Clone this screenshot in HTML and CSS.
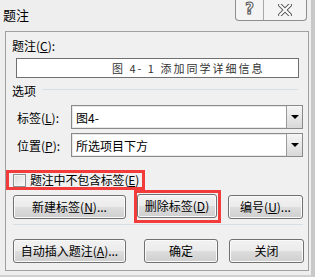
FILE: index.html
```html
<!DOCTYPE html>
<html lang="zh-CN">
<head>
    <meta charset="UTF-8">
    <title>题注</title>
    <link rel="stylesheet" href="styles.css">
</head>
<body>

<div class="window">
    <div class="titlebar">
        <span class="title">题注</span>
        <div class="caption-btns">
            <span class="cap-help">?</span>
            <span class="cap-close">
                <svg width="14" height="12" viewBox="0 0 14 12">
                    <path d="M2 1 L12 11 M12 1 L2 11" stroke="#5a5a5a" stroke-width="4" stroke-linecap="square"/>
                    <path d="M2 1 L12 11 M12 1 L2 11" stroke="#ffffff" stroke-width="2" stroke-linecap="square"/>
                </svg>
            </span>
        </div>
    </div>

    <div class="client">
        <div class="label">题注(<u>C</u>):</div>
        <div class="caption-input">图 4- 1 添加同学详细信息</div>

        <!-- 选项 -->
        <div class="group">
            <span>选项</span>
            <span class="group-line"></span>
        </div>
        <div class="field">
            <span class="field-label">标签(<u>L</u>):</span>
            <div class="combo">
                <span class="combo-text">图4-</span>
                <span class="combo-arrow"></span>
            </div>
        </div>
        <div class="field">
            <span class="field-label">位置(<u>P</u>):</span>
            <div class="combo">
                <span class="combo-text">所选项目下方</span>
                <span class="combo-arrow"></span>
            </div>
        </div>

        <div class="mark check-mark">
            <span class="checkbox"></span>
            <span>题注中不包含标签(<u>E</u>)</span>
        </div>

        <div class="btn-row row1">
            <button class="btn w-wide">新建标签(<u>N</u>)...</button>
            <div class="mark btn-mark">
                <button class="btn w-mid">删除标签(<u>D</u>)</button>
            </div>
            <button class="btn w-num">编号(<u>U</u>)...</button>
        </div>

        <div class="sep"></div>

        <div class="btn-row row2">
            <button class="btn w-wide">自动插入题注(<u>A</u>)...</button>
            <button class="btn w-ok">确定</button>
            <button class="btn w-num">关闭</button>
        </div>
    </div>
</div>

</body>
</html>
```

FILE: styles.css
```css
body { margin: 0; font: 12px "Noto Sans CJK SC", sans-serif; color: #000; }
u { text-decoration: underline; text-underline-offset: 1px; }

.window { width: 315px; height: 277px; box-sizing: border-box; background: #eeeeee; display: flex; flex-direction: column; border-right: 4px solid #c8c8c8; border-bottom: 2px solid #d0d0d0; }

.titlebar { height: 31px; flex: none; display: flex; justify-content: space-between; align-items: flex-start; }
.title { padding: 6px 0 0 3px; font-size: 13px; line-height: 18px; }
.caption-btns { display: flex; height: 20px; margin-right: 4px; border: 1px solid #8e8e8e; border-top: none; border-radius: 0 0 4px 4px; background: #f4f4f4; }
.cap-help { width: 27px; border-right: 1px solid #a8a8a8; text-align: center; font: bold 15px "DejaVu Sans", sans-serif; line-height: 19px; color: #fff; -webkit-text-stroke: 1px #555; }
.cap-close { width: 42px; display: flex; align-items: center; justify-content: center; }

.client { flex: 1; margin: 0 2px 4px 5px; border: 1px solid #a0a0a0; display: flex; flex-direction: column; background: #f0f0f0; }

.label { margin: 6px 0 0 6px; line-height: 16px; }
.caption-input { margin: 4px 0 0 10px; width: 283px; height: 20px; box-sizing: border-box; border: 1px solid #707070; background: #fff; padding-left: 95px; font-size: 11px; line-height: 18px; letter-spacing: 2px; color: #333; white-space: nowrap; }

.group { margin: 5px 0 0 6px; display: flex; align-items: center; line-height: 16px; width: 286px; }
.group-line { flex: 1; height: 1px; background: #d5dfe5; margin-left: 6px; margin-top: -3px; }

.field { display: flex; align-items: center; margin-left: 11px; }
.field + .field { margin-top: 4px; }
.group + .field { margin-top: 6px; }
.field-label { width: 54px; }
.combo { width: 232px; height: 24px; box-sizing: border-box; border: 1px solid #8a8a8a; background: #fff; display: flex; align-items: center; box-shadow: inset 0 0 0 1px #e8e8e8; }
.combo-text { flex: 1; padding-left: 4px; }
.combo-arrow { width: 16px; height: 22px; box-sizing: border-box; border-left: 1px solid #9a9a9a; background: linear-gradient(#f6f6f6, #d8d8d8); position: relative; }
.combo-arrow::after { content: ""; position: absolute; left: 4px; top: 9px; border-left: 4px solid transparent; border-right: 4px solid transparent; border-top: 4px solid #000; }

.mark { border: 3px solid #f23c3c; }
.check-mark { margin-top: 13px; align-self: flex-start; height: 20px; box-sizing: border-box; display: flex; align-items: center; gap: 4px; padding: 0 3px 0 4px; line-height: 14px; white-space: nowrap; letter-spacing: -0.2px; }
.checkbox { width: 11px; height: 11px; border: 1px solid #8e8f8f; background: linear-gradient(135deg, #dcdcdc, #f8f8f8); box-shadow: inset 0 0 0 1px #f4f4f4; }

.btn-row { display: flex; align-items: center; margin-left: 7px; }
.btn { height: 24px; box-sizing: border-box; border: 1px solid #707070; border-radius: 3px; background: linear-gradient(#f2f2f2 0%, #ebebeb 50%, #dddddd 51%, #cfcfcf 100%); box-shadow: inset 0 0 0 1px #fbfbfb; font: 12px "Noto Sans CJK SC", sans-serif; color: #000; padding: 0; line-height: 20px; white-space: nowrap; }
.w-wide { width: 113px; }
.w-mid { width: 80px; display: block; }
.w-ok { width: 74px; margin-left: 18px; }
.w-num { width: 75px; margin-left: 7px; }
.btn-mark { margin-left: 8px; padding: 1px 1px 2px 0; }

.sep { height: 1px; background: #d5dfe5; margin: 1px 0 0 7px; width: 290px; }
.row2 { margin-top: 14px; }
.row2 .w-num { margin-left: 11px; }
```
